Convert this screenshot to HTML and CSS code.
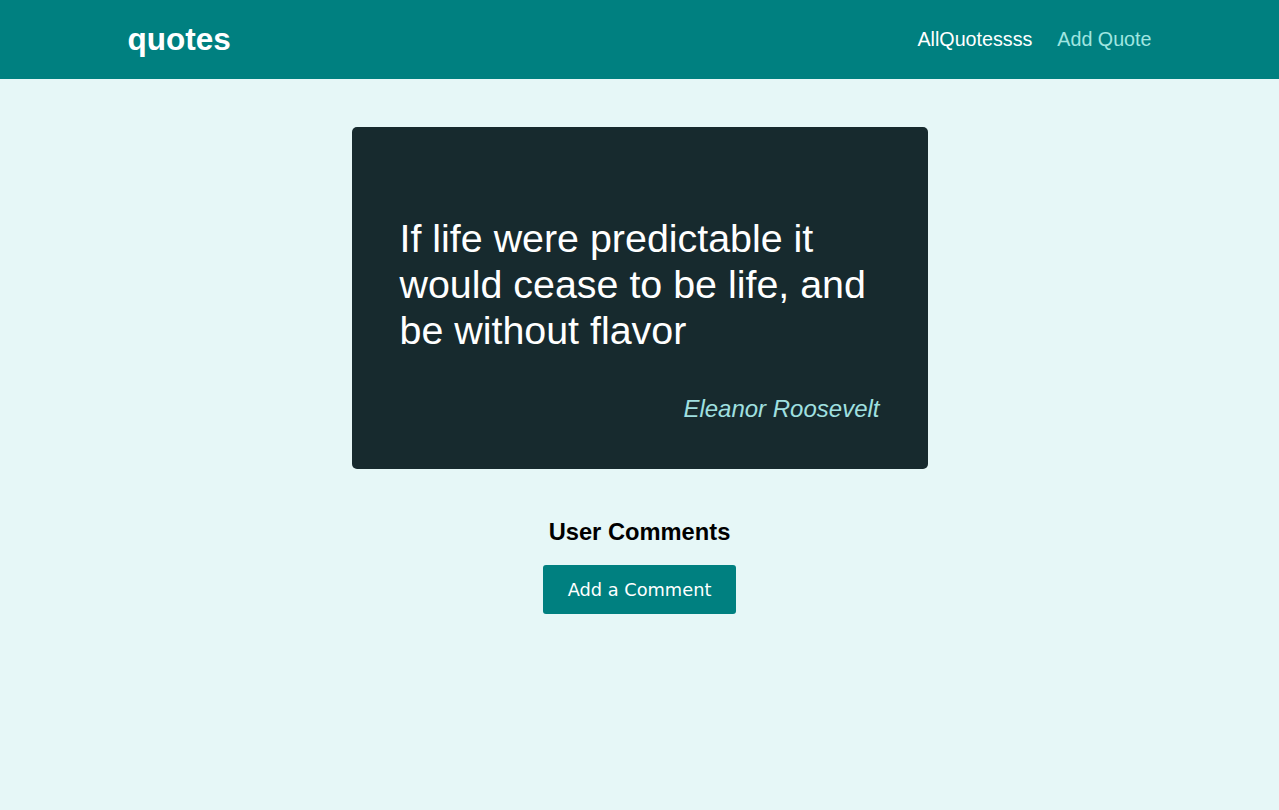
FILE: index.html
```html
<!DOCTYPE html>
<html lang="en">
<head>
<meta charset="utf-8">
<title>quotes</title>
<link rel="stylesheet" href="styles.css">
</head>
<body>
<header class="header">
  <div class="header-inner">
    <div class="logo">quotes</div>
    <nav class="nav">
      <a class="nav-link" href="#">AllQuotessss</a>
      <a class="nav-link active" href="#">Add Quote</a>
    </nav>
  </div>
</header>
<main class="main">
  <figure class="quote-card">
    <p class="quote-text">If life were predictable it would cease to be life, and be without flavor</p>
    <figcaption class="quote-author">Eleanor Roosevelt</figcaption>
  </figure>
  <section class="comments">
    <h2 class="comments-title">User Comments</h2>
    <button class="btn">Add a Comment</button>
  </section>
</main>
</body>
</html>
```

FILE: styles.css
```css
* { box-sizing: border-box; }
html, body {
  margin: 0;
  padding: 0;
}
body {
  background: #e6f7f7;
  font-family: "Liberation Sans", Arial, sans-serif;
  min-height: 810px;
}
.header {
  background: #008080;
  height: 79px;
}
.header-inner {
  width: 1024px;
  margin: 0 auto;
  height: 100%;
  display: flex;
  align-items: center;
  justify-content: space-between;
}
.logo {
  color: #fff;
  font-size: 31.5px;
  font-weight: bold;
}
.nav {
  display: flex;
  gap: 25px;
}
.nav-link {
  color: #fff;
  text-decoration: none;
  font-size: 19.7px;
}
.nav-link.active {
  color: #a0e6e0;
}
.main {
  display: flex;
  flex-direction: column;
  align-items: center;
  padding-top: 48px;
}
.quote-card {
  margin: 0;
  width: 576px;
  height: 342px;
  background: #172a2e;
  border-radius: 5px;
  padding: 88px 48px 0 48px;
  color: #fff;
}
.quote-text {
  margin: 0;
  font-size: 39.4px;
  line-height: 46px;
}
.quote-author {
  margin-top: 42px;
  text-align: right;
  font-style: italic;
  font-size: 24px;
  color: #a0e0e0;
}
.comments {
  display: flex;
  flex-direction: column;
  align-items: center;
  padding-top: 50px;
}
.comments-title {
  margin: 0;
  font-size: 23.7px;
  font-weight: bold;
  color: #000;
}
.btn {
  margin-top: 19px;
  width: 193px;
  height: 49px;
  background: #008080;
  color: #fff;
  border: none;
  border-radius: 3px;
  font-family: "DejaVu Sans", Verdana, sans-serif;
  font-size: 17.8px;
  cursor: pointer;
}
```
